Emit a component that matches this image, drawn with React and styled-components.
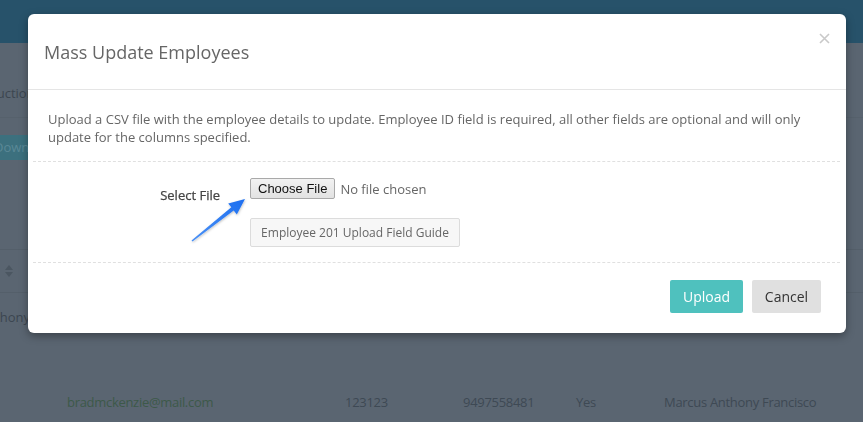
import React from 'react';
import styled, { createGlobalStyle } from 'styled-components';

const GlobalStyle = createGlobalStyle`
  html, body {
    margin: 0;
    padding: 0;
    width: 863px;
    height: 422px;
    overflow: hidden;
    background: #5a6571;
    font-family: 'Open Sans', 'Liberation Sans', sans-serif;
  }
  * { box-sizing: border-box; }
`;

const Page = styled.div`
  width: 863px;
  height: 422px;
  overflow: hidden;
  background: #5a6571;
  display: flex;
  flex-direction: column;
`;

const TopBar = styled.div`
  height: 43px;
  background: #27526a;
  flex-shrink: 0;
`;

const Toolbar = styled.div`
  height: 75px;
  display: flex;
  align-items: center;
  padding-top: 25px;
  margin-left: -31px;
  font-size: 13px;
  color: #3c4650;
  border-bottom: 1px solid #56616c;
`;

const ButtonRow = styled.div`
  height: 131px;
  padding-top: 17px;
`;

const DimButton = styled.div`
  width: 34px;
  height: 25px;
  margin-left: -6px;
  background: #3c707e;
  color: #5a8896;
  font-size: 13px;
  line-height: 25px;
  overflow: hidden;
  white-space: nowrap;
`;

const HeadRow = styled.div`
  height: 44px;
  border-top: 1px solid #545f6a;
  border-bottom: 1px solid #545f6a;
  display: flex;
  align-items: center;
  padding-left: 4px;
`;

const NameRow = styled.div`
  height: 48px;
  display: flex;
  align-items: center;
  margin-left: -21px;
  font-size: 13px;
  color: #3c4650;
`;

const DataRow = styled.div`
  flex: 1;
  display: grid;
  grid-template-columns: 278px 118px 113px 88px auto;
  align-items: start;
  padding-left: 67px;
  padding-top: 52px;
  font-size: 13px;
  letter-spacing: -0.3px;
`;

const Cell = styled.div`
  color: ${p => (p.$link ? '#3d5949' : '#3e4954')};
  white-space: nowrap;
`;

const Modal = styled.div`
  position: fixed;
  left: 28px;
  top: 14px;
  width: 818px;
  height: 319px;
  background: #fff;
  border-radius: 6px;
  box-shadow: 0 3px 9px rgba(0, 0, 0, 0.35);
  display: flex;
  flex-direction: column;
`;

const ModalHeader = styled.div`
  height: 76px;
  border-bottom: 1px solid #e5e5e5;
  display: flex;
  align-items: center;
  justify-content: space-between;
  padding: 0 15px 0 16px;
`;

const Title = styled.h4`
  margin: 0;
  font-size: 18px;
  font-weight: 400;
  color: #666;
`;

const Close = styled.button`
  border: 0;
  background: none;
  padding: 0;
  width: 14px;
  height: 14px;
  margin-top: -26px;
  display: flex;
  align-items: center;
  justify-content: center;
`;

const ModalBody = styled.div`
  padding: 20px 6px 0 5px;
`;

const Intro = styled.p`
  margin: 0;
  padding: 0 15px 15px;
  font-size: 13px;
  line-height: 18px;
  color: #666;
  border-bottom: 1px dashed #e0e0e0;
`;

const FormRow = styled.div`
  position: relative;
  display: flex;
  align-items: flex-start;
  padding: 16px 15px 15px;
  border-bottom: 1px dashed #e0e0e0;
`;

const Label = styled.label`
  width: 172px;
  text-align: right;
  font-size: 13px;
  font-weight: 500;
  color: #444;
  -webkit-text-stroke: 0.25px #444;
  padding-top: 8px;
`;

const Field = styled.div`
  margin-left: 30px;
  display: flex;
  flex-direction: column;
  gap: 19px;
`;

const FileLine = styled.div`
  display: flex;
  align-items: center;
  gap: 5px;
`;

const ChooseButton = styled.span`
  height: 21px;
  padding: 0 7px;
  border: 1px solid #a9a9a9;
  border-radius: 2px;
  background: linear-gradient(#f2f2f2, #e2e2e2);
  font-family: 'Liberation Sans', Arial, sans-serif;
  font-size: 13px;
  line-height: 19px;
  color: #111;
`;

const FileStatus = styled.span`
  font-size: 13px;
  color: #666;
`;

const GuideButton = styled.button`
  height: 29px;
  width: 210px;
  padding: 0;
  border: 1px solid #dcdcdc;
  border-radius: 2px;
  background: #f7f7f7;
  font-family: 'Open Sans', sans-serif;
  font-size: 12px;
  color: #666;
`;

const Arrow = styled.svg`
  position: absolute;
  left: 155px;
  top: 20px;
  overflow: visible;
`;

const Footer = styled.div`
  display: flex;
  justify-content: flex-end;
  gap: 9px;
  padding: 17px 25px 0 0;
`;

const ActionButton = styled.button`
  height: 33px;
  width: ${p => p.$w}px;
  border: 0;
  border-radius: 2px;
  background: ${p => (p.$primary ? '#4fc1be' : '#e0e0e0')};
  color: ${p => (p.$primary ? '#fff' : '#333')};
  font-family: 'Open Sans', sans-serif;
  font-size: 14px;
`;

const SortIcon = () => (
  <svg width="10" height="14" viewBox="0 0 10 14">
    <path d="M5 1 L9 6 H1 Z" fill="#4b5661" />
    <path d="M5 13 L9 8 H1 Z" fill="#4b5661" />
  </svg>
);

export default function App() {
  return (
    <>
      <GlobalStyle />
      <Page>
        <TopBar />
        <Toolbar>Instructions</Toolbar>
        <ButtonRow>
          <DimButton>Download</DimButton>
        </ButtonRow>
        <HeadRow>
          <SortIcon />
        </HeadRow>
        <NameRow>Anthony</NameRow>
        <DataRow>
          <Cell $link>bradmckenzie@mail.com</Cell>
          <Cell>123123</Cell>
          <Cell>9497558481</Cell>
          <Cell>Yes</Cell>
          <Cell>Marcus Anthony Francisco</Cell>
        </DataRow>
      </Page>

      <Modal>
        <ModalHeader>
          <Title>Mass Update Employees</Title>
          <Close aria-label="Close">
            <svg width="11" height="11" viewBox="0 0 11 11">
              <path d="M1 1 L10 10 M10 1 L1 10" stroke="#c9c9c9" strokeWidth="1.6" />
            </svg>
          </Close>
        </ModalHeader>
        <ModalBody>
          <Intro>
            Upload a CSV file with the employee details to update. Employee ID field is required, all other fields are optional and will only update for the columns specified.
          </Intro>
          <FormRow>
            <Label>Select File</Label>
            <Field>
              <FileLine>
                <ChooseButton>Choose File</ChooseButton>
                <FileStatus>No file chosen</FileStatus>
              </FileLine>
              <GuideButton>Employee 201 Upload Field Guide</GuideButton>
            </Field>
            <Arrow width="60" height="65" viewBox="0 0 60 65">
              <defs>
                <linearGradient id="arw" x1="0" y1="1" x2="1" y2="0">
                  <stop offset="0" stopColor="#4a90f5" />
                  <stop offset="1" stopColor="#1d6ff0" />
                </linearGradient>
                <filter id="sh" x="-20%" y="-20%" width="140%" height="140%">
                  <feDropShadow dx="0.5" dy="1" stdDeviation="0.8" floodColor="#000" floodOpacity="0.25" />
                </filter>
              </defs>
              <path
                d="M3.5 58.4 L43.3 25.3 L40.2 21.4 L57 17 L48.8 32.4 L45.7 28.5 L4.5 59.6 Z"
                fill="url(#arw)"
                filter="url(#sh)"
              />
            </Arrow>
          </FormRow>
        </ModalBody>
        <Footer>
          <ActionButton $primary $w={73}>Upload</ActionButton>
          <ActionButton $w={69}>Cancel</ActionButton>
        </Footer>
      </Modal>
    </>
  );
}
